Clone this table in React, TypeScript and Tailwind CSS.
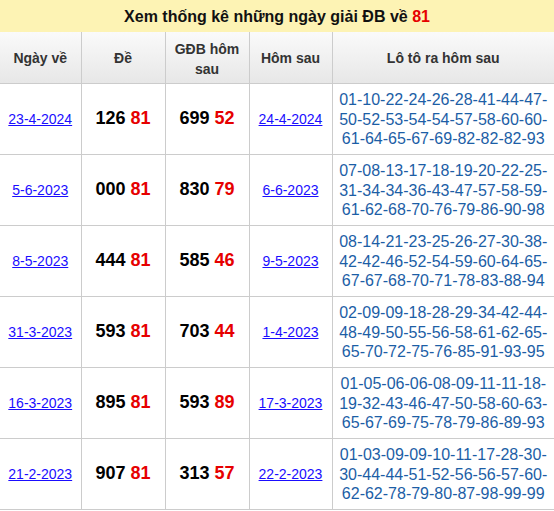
import React from 'react';

type Row = {
  day: string;
  de: string;
  gdb: [string, string];
  next: string;
  loto: string[];
};

const ROWS: Row[] = [
  {
    day: '23-4-2024',
    de: '126',
    gdb: ['699', '52'],
    next: '24-4-2024',
    loto: ['01-10-22-24-26-28-41-44-47-', '50-52-53-54-54-57-58-60-60-', '61-64-65-67-69-82-82-82-93'],
  },
  {
    day: '5-6-2023',
    de: '000',
    gdb: ['830', '79'],
    next: '6-6-2023',
    loto: ['07-08-13-17-18-19-20-22-25-', '31-34-34-36-43-47-57-58-59-', '61-62-68-70-76-79-86-90-98'],
  },
  {
    day: '8-5-2023',
    de: '444',
    gdb: ['585', '46'],
    next: '9-5-2023',
    loto: ['08-14-21-23-25-26-27-30-38-', '42-42-46-52-54-59-60-64-65-', '67-67-68-70-71-78-83-88-94'],
  },
  {
    day: '31-3-2023',
    de: '593',
    gdb: ['703', '44'],
    next: '1-4-2023',
    loto: ['02-09-09-18-28-29-34-42-44-', '48-49-50-55-56-58-61-62-65-', '65-70-72-75-76-85-91-93-95'],
  },
  {
    day: '16-3-2023',
    de: '895',
    gdb: ['593', '89'],
    next: '17-3-2023',
    loto: ['01-05-06-06-08-09-11-11-18-', '19-32-43-46-47-50-58-60-63-', '65-67-69-75-78-79-86-89-93'],
  },
  {
    day: '21-2-2023',
    de: '907',
    gdb: ['313', '57'],
    next: '22-2-2023',
    loto: ['01-03-09-09-10-11-17-28-30-', '30-44-44-51-52-56-56-57-60-', '62-62-78-79-80-87-98-99-99'],
  },
];

const cell = 'border border-[#cccccc] text-center align-middle p-0';

export default function App() {
  return (
    <div className="w-[554px] bg-white font-['Liberation_Sans',Arial,sans-serif]">
      <div className="h-[33px] bg-[#fdf3b4] flex items-center justify-center text-[16px] font-bold text-[#111]">
        Xem thống kê những ngày giải ĐB về&nbsp;<span className="text-[#e60000]">81</span>
      </div>

      <table className="w-[554px] border-collapse table-fixed -mt-px">
        <colgroup>
          <col className="w-[81px]" />
          <col className="w-[84px]" />
          <col className="w-[84px]" />
          <col className="w-[83px]" />
          <col />
        </colgroup>
        <thead>
          <tr className="h-[51px] bg-gradient-to-b from-[#fafafa] to-[#e7e7e7] text-[14px] font-bold text-[#333]">
            <th className={`${cell} border-l-0 border-t-0 pt-[3px]`}>Ngày về</th>
            <th className={`${cell} border-t-0 pt-[3px]`}>Đề</th>
            <th className={`${cell} border-t-0 leading-[20px] px-2 pt-[3px]`}>GĐB hôm sau</th>
            <th className={`${cell} border-t-0 pt-[3px]`}>Hôm sau</th>
            <th className={`${cell} border-t-0 border-r-0 pt-[3px]`}>Lô tô ra hôm sau</th>
          </tr>
        </thead>
        <tbody>
          {ROWS.map((r) => (
            <tr key={r.day} className="h-[71px]">
              <td className={`${cell} border-l-0`}>
                <a href="#" className="text-[14px] text-[#1a0dff] underline">{r.day}</a>
              </td>
              <td className={`${cell} text-[18px] font-bold text-black`}>
                {r.de} <span className="text-[#e60000]">81</span>
              </td>
              <td className={`${cell} text-[18px] font-bold text-black`}>
                {r.gdb[0]} <span className="text-[#e60000]">{r.gdb[1]}</span>
              </td>
              <td className={cell}>
                <a href="#" className="text-[14px] text-[#1a0dff] underline">{r.next}</a>
              </td>
              <td className={`${cell} border-r-0 text-[16px] leading-[19.5px] text-[#1c5ea6] pt-[2px]`}>
                {r.loto.map((l) => (
                  <div key={l}>{l}</div>
                ))}
              </td>
            </tr>
          ))}
        </tbody>
      </table>
    </div>
  );
}
